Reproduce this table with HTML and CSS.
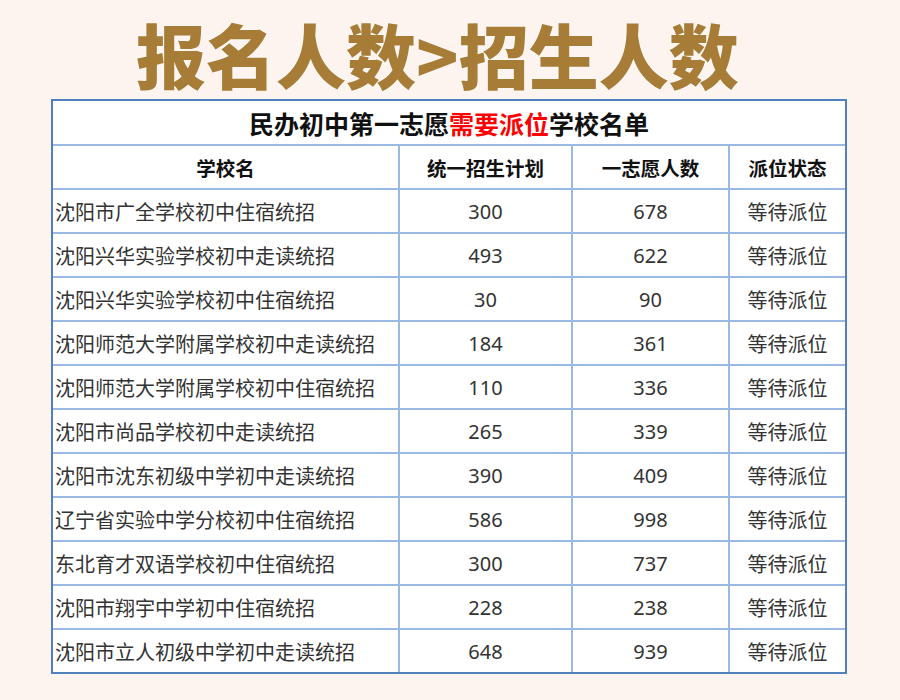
FILE: index.html
```html
<!DOCTYPE html>
<html lang="zh-CN">
<head>
<meta charset="utf-8">
<link rel="stylesheet" href="styles.css">
</head>
<body>
<div class="page">
  <h1 class="headline">报名人数&gt;招生人数</h1>
  <div class="frame">
  <table class="list">
    <colgroup>
      <col class="c1"><col class="c2"><col class="c3"><col class="c4">
    </colgroup>
    <thead>
      <tr><th colspan="4" class="caption">民办初中第一志愿<span class="red">需要派位</span>学校名单</th></tr>
      <tr class="head"><th>学校名</th><th>统一招生计划</th><th>一志愿人数</th><th>派位状态</th></tr>
    </thead>
    <tbody>
      <tr><td class="name">沈阳市广全学校初中住宿统招</td><td class="num">300</td><td class="num">678</td><td>等待派位</td></tr>
      <tr><td class="name">沈阳兴华实验学校初中走读统招</td><td class="num">493</td><td class="num">622</td><td>等待派位</td></tr>
      <tr><td class="name">沈阳兴华实验学校初中住宿统招</td><td class="num">30</td><td class="num">90</td><td>等待派位</td></tr>
      <tr><td class="name">沈阳师范大学附属学校初中走读统招</td><td class="num">184</td><td class="num">361</td><td>等待派位</td></tr>
      <tr><td class="name">沈阳师范大学附属学校初中住宿统招</td><td class="num">110</td><td class="num">336</td><td>等待派位</td></tr>
      <tr><td class="name">沈阳市尚品学校初中走读统招</td><td class="num">265</td><td class="num">339</td><td>等待派位</td></tr>
      <tr><td class="name">沈阳市沈东初级中学初中走读统招</td><td class="num">390</td><td class="num">409</td><td>等待派位</td></tr>
      <tr><td class="name">辽宁省实验中学分校初中住宿统招</td><td class="num">586</td><td class="num">998</td><td>等待派位</td></tr>
      <tr><td class="name">东北育才双语学校初中住宿统招</td><td class="num">300</td><td class="num">737</td><td>等待派位</td></tr>
      <tr><td class="name">沈阳市翔宇中学初中住宿统招</td><td class="num">228</td><td class="num">238</td><td>等待派位</td></tr>
      <tr><td class="name">沈阳市立人初级中学初中走读统招</td><td class="num">648</td><td class="num">939</td><td>等待派位</td></tr>
    </tbody>
  </table>
  </div>
</div>
</body>
</html>
```

FILE: styles.css
```css
html, body {
  margin: 0;
  padding: 0;
  background: #fdf4ef;
}
.page {
  width: 900px;
  height: 700px;
  padding-top: 8px;
  box-sizing: border-box;
  display: flex;
  flex-direction: column;
  align-items: flex-start;
}
.headline {
  margin: 0 0 0 136px;
  font-family: "Noto Sans CJK SC", sans-serif;
  font-weight: 900;
  font-size: 70px;
  line-height: 91px;
  height: 91px;
  color: #a67c37;
  letter-spacing: 0;
  text-shadow: 0 0 2px #fff;
}
.frame {
  margin-left: 51px;
  width: 796px;
  box-sizing: border-box;
  border: 2px solid #4f81bd;
  background: #fff;
}
.list {
  width: 792px;
  border-collapse: collapse;
  table-layout: fixed;
  background: #fff;
  border-style: hidden;
  font-family: "Noto Sans CJK SC", sans-serif;
  color: #333;
}
.c1 { width: 346px; }
.c2 { width: 173px; }
.c3 { width: 157px; }
.c4 { width: 116px; }
.list th, .list td {
  border: 2px solid #9ab9e3;
  padding: 0;
  height: 42px;
  font-size: 20px;
  text-align: center;
  white-space: nowrap;
  overflow: hidden;
}
.list .caption {
  height: 43px;
  font-size: 25px;
  font-weight: 700;
  color: #111;
}
.red { color: #ff0000; }
.head th {
  font-size: 19.5px;
  font-weight: 700;
  color: #111;
}
.list td.name {
  text-align: left;
  padding-left: 2px;
}
.list td.num {
  font-family: "Noto Sans", "Open Sans", sans-serif;
  font-size: 20px;
}
```
